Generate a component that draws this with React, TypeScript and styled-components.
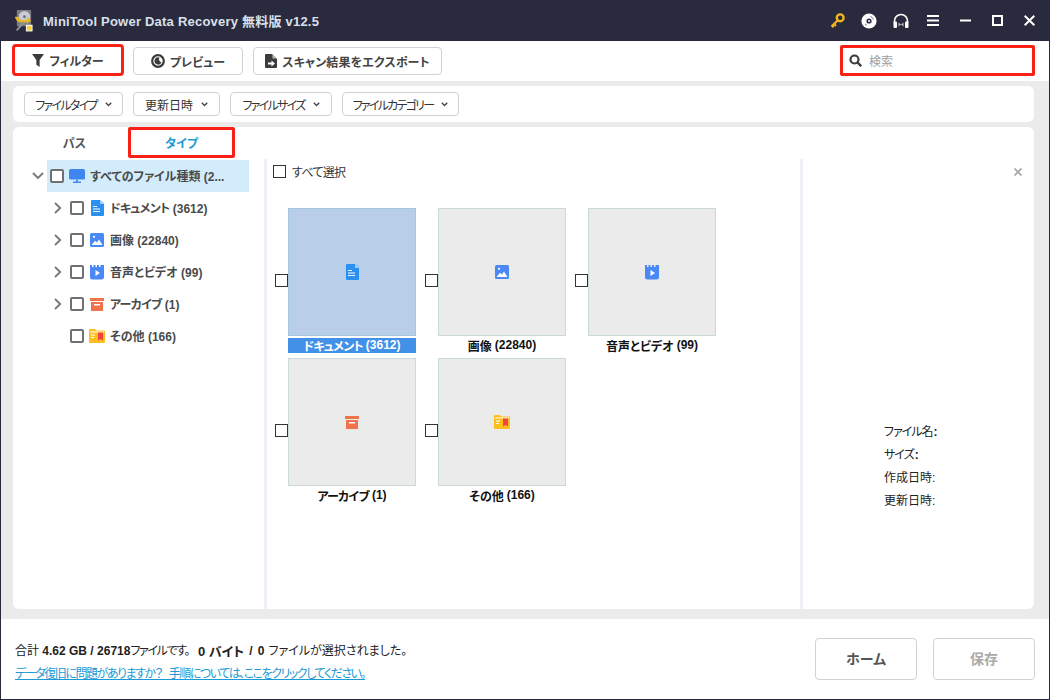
import React from 'react';
import styled, { createGlobalStyle, css } from 'styled-components';

const GlobalStyle = createGlobalStyle`
  html, body {
    margin: 0;
    padding: 0;
    background: #fff;
  }
  body {
    font-family: "Liberation Sans", "Noto Sans CJK JP", sans-serif;
    font-size: 12px;
    font-feature-settings: "palt";
    color: #222;
  }
  * {
    box-sizing: border-box;
  }
`;

const RED = '#fb2015';
const NAVY = '#2a2a3e';

const Window = styled.div`
  width: 1050px;
  height: 700px;
  display: flex;
  flex-direction: column;
  overflow: hidden;
  border: 1px solid ${NAVY};
  border-top: 0;
`;

const TitleBar = styled.div`
  height: 41px;
  flex: none;
  display: flex;
  align-items: center;
  background: ${NAVY};
  padding-left: 14px;
  margin: 0 -1px;
`;

const Title = styled.div`
  margin-left: 10px;
  color: #d9e0ea;
  font-size: 13px;
  font-weight: 700;
  letter-spacing: 0.22px;
`;

const WindowControls = styled.div`
  margin-left: auto;
  display: flex;
  align-items: center;
  padding-right: 5px;
`;

const ControlButton = styled.div`
  width: 32px;
  height: 32px;
  display: flex;
  align-items: center;
  justify-content: center;
`;

const Toolbar = styled.div`
  height: 40px;
  flex: none;
  display: flex;
  align-items: center;
  gap: 10px;
  padding: 0 14px 0 11px;
`;

const ToolButton = styled.div<{ $w: number; $marked?: boolean }>`
  width: ${({ $w }) => $w}px;
  height: 28px;
  display: flex;
  align-items: center;
  justify-content: center;
  gap: 5px;
  border: 1px solid #d2d2d2;
  border-radius: 4px;
  background: #fff;
  color: #444;
  font-size: 12px;
  font-weight: 700;
  ${({ $marked }) =>
    $marked &&
    css`
      width: 112px;
      height: 32px;
      margin-right: -1px;
      margin-bottom: 2px;
      border: 3px solid ${RED};
    `}
`;

const ExportLabel = styled.span`
  letter-spacing: 0.15px;
`;

const SearchBox = styled.label`
  margin-left: auto;
  width: 195px;
  height: 31px;
  margin-bottom: 2px;
  display: flex;
  align-items: center;
  gap: 7px;
  padding-left: 6px;
  border: 3px solid ${RED};
  border-radius: 2px;
`;

const SearchInput = styled.input`
  border: 0;
  outline: 0;
  min-width: 0;
  flex: 1;
  padding: 3px 0 0;
  font: inherit;
  &::placeholder {
    color: #a0a0a0;
  }
`;

const Workspace = styled.div`
  flex: 1;
  min-height: 0;
  display: flex;
  flex-direction: column;
  background: #ebebeb;
  padding: 5px 15px 10px 12px;
`;

const FilterBar = styled.div`
  height: 36px;
  flex: none;
  display: flex;
  align-items: center;
  gap: 10px;
  padding-left: 11px;
  background: #fff;
  border-radius: 6px;
  margin-bottom: 5px;
`;

const FilterChip = styled.div<{ $w: number }>`
  width: ${({ $w }) => $w}px;
  height: 24px;
  display: flex;
  align-items: center;
  justify-content: center;
  gap: 8px;
  border: 1px solid #d2d2d2;
  border-radius: 4px;
  color: #333;
`;

const FilterLabel = styled.span<{ $kana: boolean }>`
  letter-spacing: ${({ $kana }) => ($kana ? '-1.7px' : '0')};
`;

const ResultsPanel = styled.div`
  flex: 1;
  min-height: 0;
  display: flex;
  flex-direction: column;
  background: #fff;
  border-radius: 6px;
`;

const Tabs = styled.div`
  height: 32px;
  flex: none;
  display: flex;
  align-items: flex-start;
`;

const Tab = styled.div<{ $active?: boolean }>`
  height: 31px;
  display: flex;
  align-items: center;
  justify-content: center;
  font-size: 12px;
  font-weight: 700;
  ${({ $active }) =>
    $active
      ? css`
          width: 107px;
          color: #1c9ad6;
          border: 3px solid ${RED};
          border-radius: 2px;
        `
      : css`
          width: 115px;
          padding-left: 8px;
          color: #555;
        `}
`;

const Columns = styled.div`
  flex: 1;
  min-height: 0;
  display: flex;
`;

const TreeColumn = styled.div`
  width: 254px;
  flex: none;
  padding-top: 1px;
  border-right: 3px solid #f0f0f6;
`;

const TreeRow = styled.div<{ $child?: boolean }>`
  height: 32px;
  display: flex;
  align-items: center;
  padding-left: ${({ $child }) => ($child ? 38 : 17)}px;
`;

const ChevronSlot = styled.div<{ $child?: boolean }>`
  width: ${({ $child }) => ($child ? 16 : 17)}px;
  flex: none;
  display: flex;
  justify-content: center;
  padding-right: 2px;
`;

const TreeEntry = styled.div<{ $selected?: boolean }>`
  height: 100%;
  display: flex;
  align-items: center;
  flex: ${({ $selected }) => ($selected ? 1 : 'none')};
  padding-left: 3px;
  margin-right: 15px;
  background: ${({ $selected }) => ($selected ? '#d3ecfb' : 'transparent')};
`;

const TreeCheck = styled.span`
  width: 14px;
  height: 14px;
  flex: none;
  border: 2px solid #707070;
  border-radius: 2px;
  background: #fff;
`;

const TreeIcon = styled.span`
  width: 16px;
  height: 18px;
  flex: none;
  margin-left: 5px;
  display: flex;
  align-items: center;
  justify-content: center;
`;

const TreeLabel = styled.span`
  margin: 0 0 2px 5px;
  font-size: 12px;
  font-weight: 700;
  color: #4a4a4a;
  white-space: nowrap;
`;

const CategoryName = styled.span<{ $kana: boolean }>`
  letter-spacing: ${({ $kana }) => ($kana ? '-0.7px' : '0')};
`;

const GridColumn = styled.div`
  flex: 1;
  min-width: 0;
`;

const SelectAll = styled.div`
  height: 25px;
  display: flex;
  align-items: center;
  gap: 6px;
  padding-left: 6px;
  color: #333;
  letter-spacing: -0.7px;
`;

const BoxCheck = styled.span`
  width: 13px;
  height: 13px;
  flex: none;
  border: 1.5px solid #333;
  background: #fff;
`;

const TileGrid = styled.div`
  display: grid;
  grid-template-columns: repeat(3, 141px);
  column-gap: 9px;
  row-gap: 5px;
  margin-top: 24px;
  padding-left: 8px;
`;

const TileCell = styled.div`
  display: grid;
  grid-template-columns: 13px 128px;
  grid-template-rows: 128px 15px;
  row-gap: 2px;
`;

const TileCheck = styled(BoxCheck)`
  align-self: center;
  margin-top: 17px;
`;

const Tile = styled.div<{ $selected?: boolean }>`
  display: flex;
  align-items: center;
  justify-content: center;
  border: 1px solid ${({ $selected }) => ($selected ? '#a5c5e0' : '#cbdad7')};
  background: ${({ $selected }) => ($selected ? '#b8cee9' : '#ebebeb')};
`;

const TileCaption = styled.div<{ $selected?: boolean }>`
  grid-column: 2;
  display: flex;
  align-items: center;
  justify-content: center;
  gap: 3px;
  padding-bottom: 1px;
  font-size: 12px;
  font-weight: 700;
  white-space: nowrap;
  color: ${({ $selected }) => ($selected ? '#fff' : '#111')};
  background: ${({ $selected }) => ($selected ? '#4291e9' : 'transparent')};
`;

const PreviewColumn = styled.div`
  width: 234px;
  flex: none;
  display: flex;
  flex-direction: column;
  border-left: 3px solid #f0f0f6;
`;

const PreviewClose = styled.div`
  display: flex;
  justify-content: flex-end;
  padding: 9px 12px 0 0;
`;

const PreviewDetails = styled.dl`
  margin: auto 0 0;
  padding: 0 0 96px 81px;
  color: #222;
`;

const DetailRow = styled.dt<{ $kana?: boolean }>`
  height: 23px;
  line-height: 23px;
  letter-spacing: ${({ $kana }) => ($kana ? '-1px' : '0')};
  b {
    font-weight: 700;
    margin-left: 1px;
  }
`;

const Footer = styled.div`
  height: 80px;
  flex: none;
  display: flex;
  align-items: center;
  padding: 0 14px;
`;

const FooterInfo = styled.div`
  padding-top: 7px;
  line-height: 23px;
`;

const Totals = styled.div`
  display: flex;
  align-items: center;
  color: #222;
  white-space: pre;
  b {
    font-weight: 700;
  }
`;

const TotalsKana = styled.span`
  letter-spacing: -1.4px;
`;

const BigCount = styled.b`
  font-size: 13px;
  margin: 0 5px 0 9px;
`;

const SelectedOf = styled.b`
  word-spacing: 2px;
  margin-right: 4px;
`;

const HelpLink = styled.a`
  display: block;
  color: #1c9ad6;
  text-decoration: underline;
  letter-spacing: -1.45px;
  word-spacing: 5px;
`;

const FooterActions = styled.div`
  margin-left: auto;
  display: flex;
  gap: 16px;
`;

const FooterButton = styled.div<{ $disabled?: boolean }>`
  width: 102px;
  height: 42px;
  display: flex;
  align-items: center;
  justify-content: center;
  padding-bottom: 2px;
  border: 1px solid #d2d2d2;
  border-radius: 4px;
  font-size: 14px;
  font-weight: 700;
  color: ${({ $disabled }) => ($disabled ? '#aaa' : '#555')};
`;

const Logo = () => (
  <svg width="19" height="23" viewBox="0 0 20 24">
    <rect x="3" y="1" width="15" height="17" rx="1" fill="#7d7f85" />
    <circle cx="11" cy="8" r="6" fill="#c9ccd2" />
    <circle cx="11" cy="8" r="1.5" fill="#70737a" />
    <path d="M1 8c1 5 5 7 10 6l3-1-1 3 5-4-4-4 0 3c-4 1-8 1-10-3z" fill="#e9b825" />
    <path d="M9 13L2 22l1.5 1L11 15z" fill="#8d9096" />
    <rect x="13" y="17" width="6" height="6" fill="#f3d23c" stroke="#fff" strokeWidth="1" />
  </svg>
);

const KeyIcon = () => (
  <svg width="15" height="15" viewBox="0 0 15 15">
    <circle cx="10.2" cy="4.8" r="3.4" fill="none" stroke="#f3b61f" strokeWidth="2.4" />
    <path d="M7.8 7.2L1.5 13.5M4 11l2 2M2.2 12.8l1.4 1.4" stroke="#f3b61f" strokeWidth="2.2" fill="none" />
  </svg>
);

const DiscIcon = () => (
  <svg width="16" height="16" viewBox="0 0 16 16">
    <circle cx="8" cy="8" r="7.6" fill="#fff" />
    <circle cx="8" cy="8" r="2.6" fill="#2a2a3e" />
    <circle cx="8" cy="8" r="1" fill="#fff" />
    <path d="M9.5 3.2l3.2 3.2M10.6 9.8l-.9-.9M4 11l1.5 1.5" stroke="#9a9aa6" strokeWidth="1.2" />
  </svg>
);

const HeadsetIcon = () => (
  <svg width="16" height="16" viewBox="0 0 16 16">
    <path d="M1.5 10V8a6.5 6.5 0 0 1 13 0v2" fill="none" stroke="#fff" strokeWidth="1.6" />
    <rect x="0.5" y="8.5" width="3.5" height="6.5" rx="1" fill="#fff" />
    <rect x="12" y="8.5" width="3.5" height="6.5" rx="1" fill="#fff" />
    <path d="M5.5 9.5l5 4v-4l-5 4z" fill="#b8b8c2" />
  </svg>
);

const MenuIcon = () => (
  <svg width="12" height="11" viewBox="0 0 12 11">
    <path d="M0 1h12M0 5.5h12M0 10h12" stroke="#fff" strokeWidth="2" />
  </svg>
);

const MinIcon = () => (
  <svg width="11" height="3" viewBox="0 0 11 3">
    <rect width="11" height="2" y="0.5" fill="#fff" />
  </svg>
);

const MaxIcon = () => (
  <svg width="11" height="11" viewBox="0 0 11 11">
    <rect x="1" y="1" width="9" height="9" fill="none" stroke="#fff" strokeWidth="2" />
  </svg>
);

const CloseIcon = ({ size = 11, color = '#fff', weight = 2 }: { size?: number; color?: string; weight?: number }) => (
  <svg width={size} height={size} viewBox="0 0 11 11">
    <path d="M0.7 0.7l9.6 9.6M10.3 0.7l-9.6 9.6" stroke={color} strokeWidth={weight} />
  </svg>
);

const FunnelIcon = () => (
  <svg width="12" height="13" viewBox="0 0 11 12">
    <path d="M0 0h11L7 5.5V12L4 10V5.5z" fill="#3c3c3c" />
  </svg>
);

const EyeIcon = () => (
  <svg width="14" height="14" viewBox="0 0 14 14">
    <circle cx="7" cy="7" r="5.8" fill="none" stroke="#3c3c3c" strokeWidth="2.2" />
    <path d="M8.5 3.6a3.6 3.6 0 1 0 2 4.6A3 3 0 0 1 8.5 3.6z" fill="#3c3c3c" />
  </svg>
);

const ExportIcon = () => (
  <svg width="12" height="14" viewBox="0 0 12 14">
    <path d="M0 1a1 1 0 0 1 1-1h6l5 5v8a1 1 0 0 1-1 1H1a1 1 0 0 1-1-1z" fill="#3c3c3c" />
    <path d="M3 8.5h3.5V6.5L10 9.5l-3.5 3v-2H3z" fill="#fff" />
    <path d="M7.5 0.5l4 4h-4z" fill="#bbb" />
  </svg>
);

const SearchIcon = () => (
  <svg width="13" height="13" viewBox="0 0 13 13">
    <circle cx="5.5" cy="5.5" r="4" fill="none" stroke="#3c3c3c" strokeWidth="2.2" />
    <path d="M8.5 8.5l3.7 3.7" stroke="#3c3c3c" strokeWidth="2.4" />
  </svg>
);

const CaretIcon = () => (
  <svg width="7" height="5" viewBox="0 0 7 5">
    <path d="M0.8 0.8L3.5 3.6 6.2 0.8" fill="none" stroke="#444" strokeWidth="1.4" />
  </svg>
);

const ChevronRight = () => (
  <svg width="8" height="12" viewBox="0 0 8 12">
    <path d="M1 1l5.2 5L1 11" fill="none" stroke="#777" strokeWidth="1.8" />
  </svg>
);

const ChevronDown = () => (
  <svg width="12" height="8" viewBox="0 0 12 8">
    <path d="M1 1l5 5 5-5" fill="none" stroke="#777" strokeWidth="1.8" />
  </svg>
);

const MonitorIcon = () => (
  <svg width="16" height="14" viewBox="0 0 16 14">
    <rect width="16" height="10.5" rx="1.5" fill="#3f86ef" />
    <rect x="7" y="10.5" width="2" height="2" fill="#3f86ef" />
    <rect x="4" y="12.5" width="8" height="1.5" fill="#3f86ef" />
  </svg>
);

const DocIcon = () => (
  <svg width="13" height="16" viewBox="0 0 13 16">
    <path d="M0 1a1 1 0 0 1 1-1h8l4 4v11a1 1 0 0 1-1 1H1a1 1 0 0 1-1-1z" fill="#2a90f2" />
    <path d="M9 0l4 4H9z" fill="#9ccdf8" />
    <path d="M2 6.5h4M2 9h7M2 11.5h7" stroke="#fff" strokeWidth="1" />
  </svg>
);

const ImageIcon = () => (
  <svg width="14" height="14" viewBox="0 0 14 14">
    <rect width="14" height="14" rx="1.5" fill="#4a88f6" />
    <circle cx="4" cy="3.8" r="1.1" fill="#fff" />
    <path d="M1.5 12l3.6-4.2 1.8 1.8L9 6.5l3.5 5.5z" fill="#fff" />
  </svg>
);

const VideoIcon = () => (
  <svg width="14" height="15" viewBox="0 0 14 15">
    <path d="M0 0h2v2h1.5V0h2v2H7V0h2v2h1.5V0H14v12a2.5 2.5 0 0 1-2.5 2.5h-9A2.5 2.5 0 0 1 0 12z" fill="#4a88f6" />
    <path d="M5.5 5l4.5 3-4.5 3z" fill="#fff" />
  </svg>
);

const ArchiveIcon = () => (
  <svg width="14" height="13" viewBox="0 0 14 13">
    <rect width="14" height="3" fill="#f0734a" />
    <path d="M1 4h12v9H1z" fill="#f0734a" />
    <rect x="4" y="6" width="6" height="1.5" fill="#fff" />
  </svg>
);

const FolderIcon = () => (
  <svg width="16" height="14" viewBox="0 0 16 14">
    <path d="M0 1a1 1 0 0 1 1-1h5l1.5 1.5H15a1 1 0 0 1 1 1V13a1 1 0 0 1-1 1H1a1 1 0 0 1-1-1z" fill="#fcbf1e" />
    <rect x="1" y="2.5" width="14" height="1" fill="#fff" />
    <path d="M9 3.5h5v8l-2.5-1.5L9 11.5z" fill="#f4433c" />
    <path d="M2 6h4M2 8.5h3" stroke="#fff" strokeWidth="1" />
  </svg>
);

type Category = {
  name: string;
  count: number;
  Icon: () => React.ReactElement;
  expandable: boolean;
  kana: boolean;
};

const categories: Category[] = [
  { name: 'ドキュメント', count: 3612, Icon: DocIcon, expandable: true, kana: true },
  { name: '画像', count: 22840, Icon: ImageIcon, expandable: true, kana: false },
  { name: '音声とビデオ', count: 99, Icon: VideoIcon, expandable: true, kana: false },
  { name: 'アーカイブ', count: 1, Icon: ArchiveIcon, expandable: true, kana: true },
  { name: 'その他', count: 166, Icon: FolderIcon, expandable: false, kana: false },
];

const filters = [
  { label: 'ファイルタイプ', w: 99, kana: true },
  { label: '更新日時', w: 87, kana: false },
  { label: 'ファイルサイズ', w: 102, kana: true },
  { label: 'ファイルカテゴリー', w: 117, kana: true },
];

export default function App() {
  return (
    <Window>
      <GlobalStyle />
      <TitleBar>
        <Logo />
        <Title>MiniTool Power Data Recovery 無料版 v12.5</Title>
        <WindowControls>
          <ControlButton><KeyIcon /></ControlButton>
          <ControlButton><DiscIcon /></ControlButton>
          <ControlButton><HeadsetIcon /></ControlButton>
          <ControlButton><MenuIcon /></ControlButton>
          <ControlButton><MinIcon /></ControlButton>
          <ControlButton><MaxIcon /></ControlButton>
          <ControlButton><CloseIcon /></ControlButton>
        </WindowControls>
      </TitleBar>

      <Toolbar>
        <ToolButton $w={111} $marked><FunnelIcon />フィルター</ToolButton>
        <ToolButton $w={110}><EyeIcon />プレビュー</ToolButton>
        <ToolButton $w={189}><ExportIcon /><ExportLabel>スキャン結果をエクスポート</ExportLabel></ToolButton>
        <SearchBox>
          <SearchIcon />
          <SearchInput placeholder="検索" />
        </SearchBox>
      </Toolbar>

      <Workspace>
        <FilterBar>
          {filters.map(filter => (
            <FilterChip key={filter.label} $w={filter.w}>
              <FilterLabel $kana={filter.kana}>{filter.label}</FilterLabel>
              <CaretIcon />
            </FilterChip>
          ))}
        </FilterBar>

        <ResultsPanel>
          <Tabs>
            <Tab>パス</Tab>
            <Tab $active>タイプ</Tab>
          </Tabs>

          <Columns>
            <TreeColumn>
              <TreeRow>
                <ChevronSlot><ChevronDown /></ChevronSlot>
                <TreeEntry $selected>
                  <TreeCheck />
                  <TreeIcon><MonitorIcon /></TreeIcon>
                  <TreeLabel>すべてのファイル種類 (2...</TreeLabel>
                </TreeEntry>
              </TreeRow>
              {categories.map(({ name, count, Icon, expandable, kana }) => (
                <TreeRow key={name} $child>
                  <ChevronSlot $child>{expandable && <ChevronRight />}</ChevronSlot>
                  <TreeEntry>
                    <TreeCheck />
                    <TreeIcon><Icon /></TreeIcon>
                    <TreeLabel><CategoryName $kana={kana}>{name}</CategoryName> ({count})</TreeLabel>
                  </TreeEntry>
                </TreeRow>
              ))}
            </TreeColumn>

            <GridColumn>
              <SelectAll>
                <BoxCheck />
                すべて選択
              </SelectAll>
              <TileGrid>
                {categories.map(({ name, count, Icon, kana }, index) => (
                  <TileCell key={name}>
                    <TileCheck />
                    <Tile $selected={index === 0}><Icon /></Tile>
                    <TileCaption $selected={index === 0}>
                      <CategoryName $kana={kana}>{name}</CategoryName>
                      <span>({count})</span>
                    </TileCaption>
                  </TileCell>
                ))}
              </TileGrid>
            </GridColumn>

            <PreviewColumn>
              <PreviewClose>
                <CloseIcon size={8} color="#a8a8a8" weight={2.4} />
              </PreviewClose>
              <PreviewDetails>
                <DetailRow $kana>ファイル名<b>:</b></DetailRow>
                <DetailRow $kana>サイズ<b>:</b></DetailRow>
                <DetailRow>作成日時:</DetailRow>
                <DetailRow>更新日時:</DetailRow>
              </PreviewDetails>
            </PreviewColumn>
          </Columns>
        </ResultsPanel>
      </Workspace>

      <Footer>
        <FooterInfo>
          <Totals>
            合計 <b>4.62 GB / 26718</b>
            <TotalsKana>ファイルです。</TotalsKana>
            <BigCount>0 バイト</BigCount>
            <SelectedOf>/ 0</SelectedOf>
            ファイルが選択されました。
          </Totals>
          <HelpLink>データ復旧に問題がありますか？ 手順については、ここをクリックしてください。</HelpLink>
        </FooterInfo>
        <FooterActions>
          <FooterButton>ホーム</FooterButton>
          <FooterButton $disabled>保存</FooterButton>
        </FooterActions>
      </Footer>
    </Window>
  );
}
